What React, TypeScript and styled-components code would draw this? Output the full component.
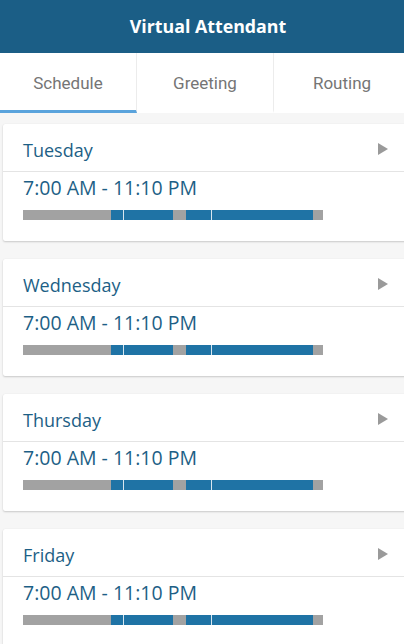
import React, { useState } from 'react'
import styled, { createGlobalStyle } from 'styled-components'

const COLORS = {
  navy: '#1b5e86',
  text: '#1d5f86',
  bar: '#1f73a5',
  barOff: '#a2a2a2',
  page: '#f6f6f6',
  line: '#e4e4e4',
  tabText: '#757575',
  tabActive: '#5aa3dc',
}

const GlobalStyle = createGlobalStyle`
  html, body {
    margin: 0;
    padding: 0;
    background: ${COLORS.page};
    overflow: hidden;
  }
  * {
    box-sizing: border-box;
  }
`

const Screen = styled.div`
  width: 404px;
  height: 644px;
  overflow: hidden;
  background: ${COLORS.page};
  font-family: 'Open Sans', 'Noto Sans', sans-serif;
`

const TitleBar = styled.header`
  height: 53px;
  display: flex;
  align-items: center;
  justify-content: center;
  background: ${COLORS.navy};
  color: #fff;
  font-size: 17.8px;
  font-weight: 700;
  padding: 0 0 2px 12px;
`

const Tabs = styled.nav`
  display: flex;
  width: 410px;
  height: 60px;
  background: #fff;
`

const Tab = styled.button<{ active?: boolean }>`
  flex: 1;
  display: flex;
  align-items: center;
  justify-content: center;
  border: none;
  border-right: 1px solid #ececec;
  border-bottom: 3px solid ${({ active }) => (active ? COLORS.tabActive : 'transparent')};
  background: #fff;
  color: ${COLORS.tabText};
  font-family: Roboto, 'Noto Sans', sans-serif;
  font-size: 17px;
  padding: 3px 0 0;
  cursor: pointer;

  &:last-child {
    border-right: none;
  }
`

const List = styled.div`
  display: flex;
  flex-direction: column;
  gap: 18px;
  padding: 11px 0 0 3px;
  margin-right: -4px;
`

const Card = styled.section`
  background: #fff;
  border-radius: 2px;
  box-shadow: 0 1px 2px rgba(0, 0, 0, 0.18), 0 0 1px rgba(0, 0, 0, 0.08);
`

const CardHeader = styled.div`
  display: flex;
  align-items: center;
  justify-content: space-between;
  padding: 14px 20px 9px 20px;
  border-bottom: 1px solid ${COLORS.line};
`

const DayName = styled.div`
  font-size: 18px;
  line-height: 24px;
  color: ${COLORS.text};
`

const Arrow = styled.span`
  width: 0;
  height: 0;
  border-top: 6px solid transparent;
  border-bottom: 6px solid transparent;
  border-left: 10px solid #9a9a9a;
  margin-top: -3px;
`

const CardBody = styled.div`
  padding: 3px 20px 21px;
`

const Hours = styled.div`
  font-size: 19.5px;
  line-height: 26px;
  color: ${COLORS.text};
`

const Bar = styled.div`
  position: relative;
  width: 300px;
  height: 10px;
  margin-top: 9px;
  background: ${COLORS.barOff};
`

const Segment = styled.div`
  position: absolute;
  top: 0;
  bottom: 0;
  background: ${COLORS.bar};
  border-left: 1px solid #d8e6ef;
`

type Span = [number, number]

const DAY_MINUTES = 24 * 60
const BAR_WIDTH = 300

const spans: Span[] = [
  [7 * 60, 8 * 60],
  [8 * 60, 12 * 60],
  [13 * 60, 15 * 60],
  [15 * 60, 23 * 60 + 10],
]

const days = ['Tuesday', 'Wednesday', 'Thursday', 'Friday']

const toPx = (m: number) => (m / DAY_MINUTES) * BAR_WIDTH

const ScheduleBar: React.FC<{ spans: Span[] }> = ({ spans }) => (
  <Bar>
    {spans.map(([from, to], i) => {
      const joined = i > 0 && spans[i - 1][1] === from
      return (
        <Segment
          key={i}
          style={{
            left: toPx(from),
            width: toPx(to) - toPx(from),
            borderLeftColor: joined ? '#d8e6ef' : COLORS.bar,
          }}
        />
      )
    })}
  </Bar>
)

export default function App() {
  const [tab, setTab] = useState('Schedule')

  return (
    <Screen>
      <GlobalStyle />
      <TitleBar>Virtual Attendant</TitleBar>
      <Tabs>
        {['Schedule', 'Greeting', 'Routing'].map(t => (
          <Tab key={t} active={tab === t} onClick={() => setTab(t)}>
            {t}
          </Tab>
        ))}
      </Tabs>
      <List>
        {days.map(day => (
          <Card key={day}>
            <CardHeader>
              <DayName>{day}</DayName>
              <Arrow />
            </CardHeader>
            <CardBody>
              <Hours>7:00 AM - 11:10 PM</Hours>
              <ScheduleBar spans={spans} />
            </CardBody>
          </Card>
        ))}
      </List>
    </Screen>
  )
}
